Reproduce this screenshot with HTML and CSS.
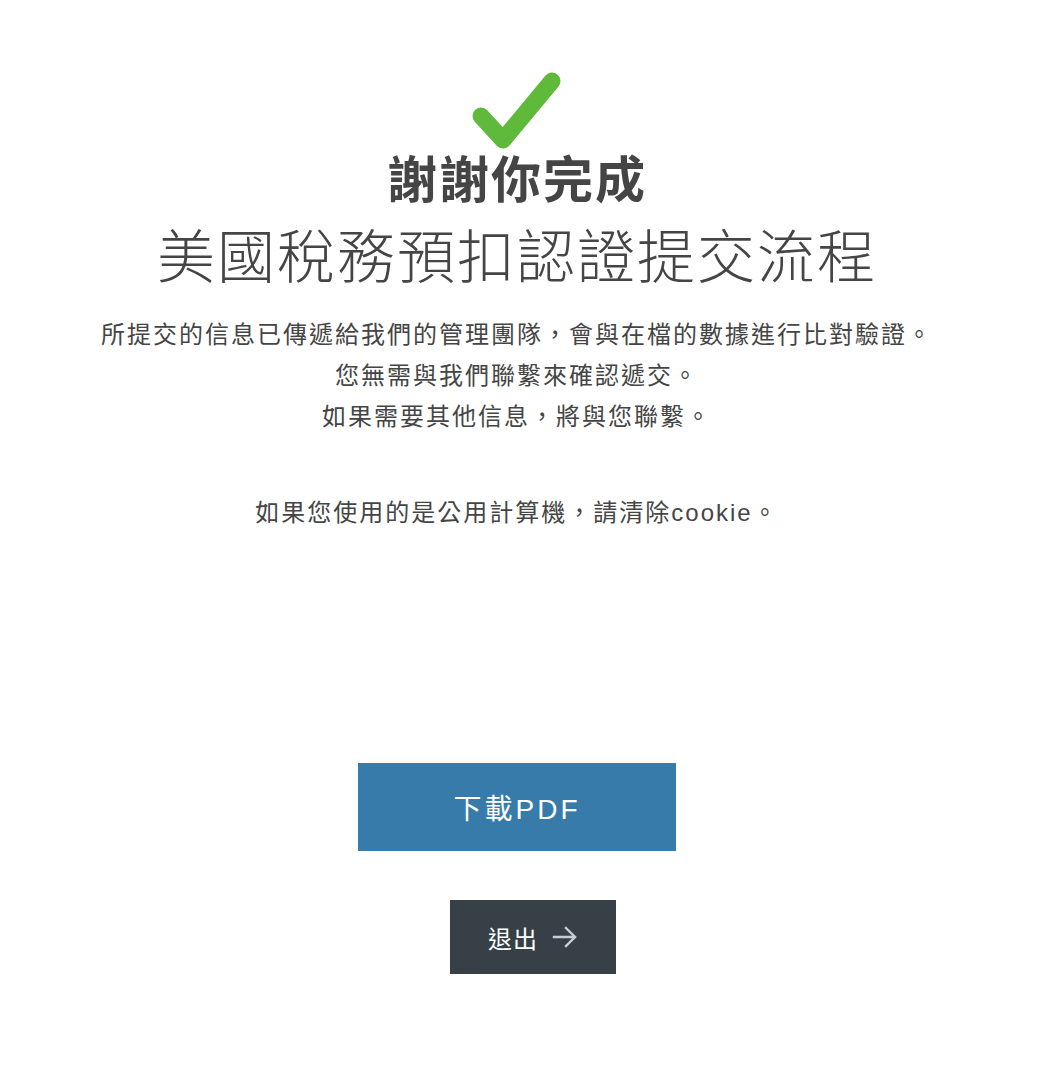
FILE: index.html
```html
<!DOCTYPE html>
<html>
	<head>
		<meta charset="utf-8">
		<title>提交完成</title>
		<meta name="viewport" content="width=device-width, initial-scale=1.0">
		<link rel="stylesheet" href="styles.css">
	</head>
	<body>
		<div class="page">
			<svg class="check" width="95" height="80" viewBox="0 0 95 80">
				<polyline points="11,46 33,70 82,11" fill="none" stroke="#5fba3c" stroke-width="17" stroke-linecap="round" stroke-linejoin="round"/>
			</svg>
			<h1 class="thanks">謝謝你完成</h1>
			<h2 class="process">美國稅務預扣認證提交流程</h2>
			<p class="message">所提交的信息已傳遞給我們的管理團隊，會與在檔的數據進行比對驗證。<br>您無需與我們聯繫來確認遞交。<br>如果需要其他信息，將與您聯繫。</p>
			<p class="message cookie">如果您使用的是公用計算機，請清除cookie。</p>
			<a class="btn-pdf" href="#">下載PDF</a>
			<a class="btn-exit" href="#">退出
				<svg class="arrow" width="26" height="22" viewBox="0 0 26 22">
					<path d="M2 11 H23 M14 2 L23 11 L14 20" fill="none" stroke="#c9cdd1" stroke-width="2.4" stroke-linecap="square"/>
				</svg>
			</a>
		</div>
	</body>
</html>
```

FILE: styles.css
```css
body {
	margin: 0px;
	background: #ffffff;
	font-family: "Liberation Sans", "Noto Sans CJK TC", sans-serif;
	color: #454545;
}
.page {
	display: flex;
	flex-direction: column;
	align-items: center;
	padding-right: 10px;
	text-align: center;
}
.check {
	display: block;
	margin-top: 70px;
}
.thanks {
	margin: 1px 0 0 0;
	font-size: 50px;
	line-height: 60px;
	font-weight: bold;
	letter-spacing: 2px;
}
.process {
	margin: 11px 0 0 0;
	font-size: 58px;
	line-height: 72px;
	font-weight: 300;
	letter-spacing: 2px;
}
.message {
	margin: 20px 0 0 0;
	font-size: 24px;
	line-height: 41px;
	letter-spacing: 2px;
}
.message.cookie {
	margin-top: 55px;
}
.btn-pdf {
	display: flex;
	align-items: center;
	justify-content: center;
	width: 318px;
	height: 88px;
	margin-top: 230px;
	background: #377baa;
	color: #ffffff;
	font-size: 28px;
	letter-spacing: 3px;
	text-decoration: none;
}
.btn-exit {
	display: flex;
	align-items: center;
	justify-content: center;
	gap: 14px;
	width: 166px;
	height: 74px;
	margin-top: 49px;
	margin-left: 32px;
	background: #373f47;
	color: #ffffff;
	font-size: 24px;
	letter-spacing: 1px;
	text-decoration: none;
}
.arrow {
	display: block;
}
```
